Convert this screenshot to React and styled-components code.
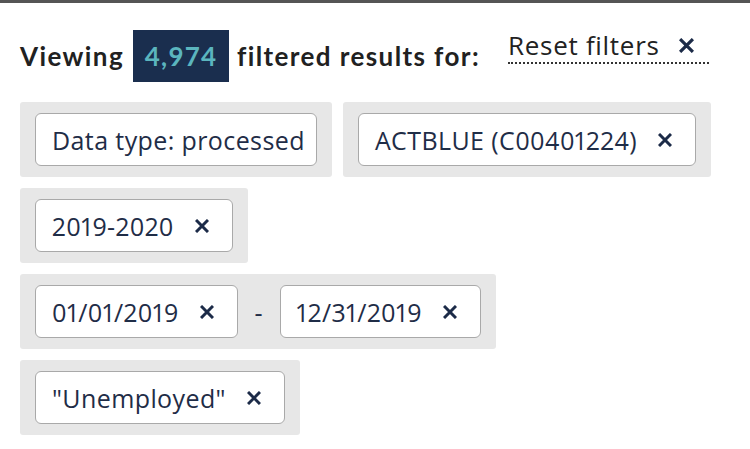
import React from 'react';
import styled, { createGlobalStyle } from 'styled-components';

const GlobalStyle = createGlobalStyle`
  body {
    margin: 0;
    background: #fff;
    font-family: "Open Sans", "Liberation Sans", sans-serif;
    color: #1f2a3c;
  }
`;

const TopBar = styled.div`
  height: 3px;
  background: #555;
`;

const Panel = styled.div`
  padding: 27px 20px 0 20px;
`;

const Header = styled.div`
  display: flex;
  align-items: center;
  margin-bottom: 20px;
`;

const Lead = styled.span`
  font-family: Lato, sans-serif;
  font-weight: 700;
  font-size: 26px;
  letter-spacing: 1.4px;
  color: #212121;
  white-space: nowrap;
`;

const Count = styled.span`
  display: inline-flex;
  align-items: center;
  justify-content: center;
  width: 96px;
  height: 52px;
  margin: 0 8px 0 9px;
  background: #1a2e4e;
  color: #5bb5be;
  font-family: Lato, sans-serif;
  font-weight: 700;
  font-size: 26px;
  letter-spacing: 1.2px;
`;

const ResetButton = styled.button`
  display: inline-flex;
  align-items: center;
  gap: 19px;
  margin: -20px 0 0 28px;
  padding: 0 15px 0 0;
  background: none;
  border: none;
  border-bottom: 2px dotted #333;
  font-family: "Open Sans", sans-serif;
  font-size: 26px;
  line-height: 34px;
  letter-spacing: 0.7px;
  color: #222;
  white-space: nowrap;
  cursor: pointer;
`;

const Groups = styled.div`
  display: flex;
  flex-wrap: wrap;
  gap: 11px 11px;
  width: 710px;
`;

const Group = styled.div`
  display: flex;
  align-items: center;
  padding: 11px 15px;
  background: #e7e7e7;
  border-radius: 3px;
`;

const Pill = styled.div`
  display: flex;
  align-items: center;
  height: 53px;
  box-sizing: border-box;
  padding: 0 ${(p) => (p.$removable ? '23px' : '11px')} 0 16px;
  gap: 21px;
  background: #fff;
  border: 1px solid #a9a9a9;
  border-radius: 6px;
  font-size: 25px;
  letter-spacing: 0.4px;
  font-variant-numeric: proportional-nums;
  color: #1f2d47;
  white-space: nowrap;
`;

const Dash = styled.span`
  width: 42px;
  text-align: center;
  font-size: 25px;
  color: #1f2d47;
`;

const CloseIcon = ({ size = 14 }) => (
  <svg width={size} height={size} viewBox="0 0 14 14">
    <path d="M1 1 L13 13 M13 1 L1 13" stroke="#1c2b48" strokeWidth="3" />
  </svg>
);

const Tag = ({ children, removable = true }) => (
  <Pill $removable={removable}>
    {children}
    {removable && <CloseIcon />}
  </Pill>
);

export default function App() {
  return (
    <>
      <GlobalStyle />
      <TopBar />
      <Panel>
        <Header>
          <Lead>Viewing</Lead>
          <Count>4,974</Count>
          <Lead>filtered results for:</Lead>
          <ResetButton>
            Reset filters <CloseIcon size={15} />
          </ResetButton>
        </Header>
        <Groups>
          <Group>
            <Tag removable={false}>Data type: processed</Tag>
          </Group>
          <Group>
            <Tag>ACTBLUE (C00401224)</Tag>
          </Group>
          <Group>
            <Tag>2019-2020</Tag>
          </Group>
          <Group>
            <Tag>01/01/2019</Tag>
            <Dash>-</Dash>
            <Tag>12/31/2019</Tag>
          </Group>
          <Group>
            <Tag>"Unemployed"</Tag>
          </Group>
        </Groups>
      </Panel>
    </>
  );
}
